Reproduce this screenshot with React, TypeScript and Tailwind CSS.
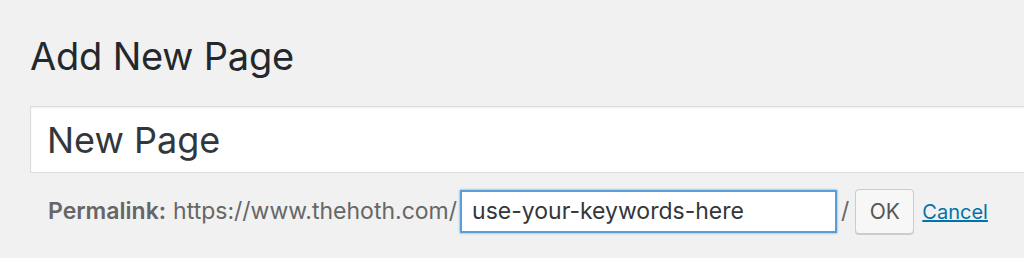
import React from "react";

const font = { fontFamily: "Inter, 'Liberation Sans', sans-serif" };

const App = () => {
  return (
    <div
      className="h-[258px] w-[1024px] overflow-hidden bg-[#f1f1f1] pl-[30px] text-[#23282d]"
      style={font}
    >
      <h1 className="pt-[34px] text-[38px] leading-[44px] font-normal tracking-[-0.2px] text-[#23282d]">
        Add New Page
      </h1>

      <div className="mt-[28px] flex h-[67px] w-[1100px] items-center border border-[#dddddd] bg-white pl-[16px] shadow-[inset_0_1px_2px_rgba(0,0,0,0.07)]">
        <span className="text-[36px] text-[#32373c]">New Page</span>
      </div>

      <div className="mt-[16px] flex items-center pl-[18px] text-[23px] text-[#666666]">
        <span className="font-semibold">Permalink:</span>
        <span className="ml-[7px]">https://www.thehoth.com/</span>
        <div className="ml-[3px] flex h-[43px] w-[377px] shrink-0 items-center border-2 border-[#5b9dd9] bg-white pl-[10px] text-[23px] text-[#32373c] shadow-[0_0_2px_rgba(30,140,190,0.8)]">
          use-your-keywords-here
        </div>
        <span className="ml-[4px]">/</span>
        <button className="ml-[6px] flex h-[45px] w-[59px] shrink-0 items-center justify-center rounded-[4px] border border-[#cccccc] bg-[#f7f7f7] text-[21px] text-[#555555] shadow-[0_1px_0_#cccccc]">
          OK
        </button>
        <a className="ml-[8px] text-[20px] text-[#0073aa] underline">Cancel</a>
      </div>
    </div>
  );
};

export default App;
